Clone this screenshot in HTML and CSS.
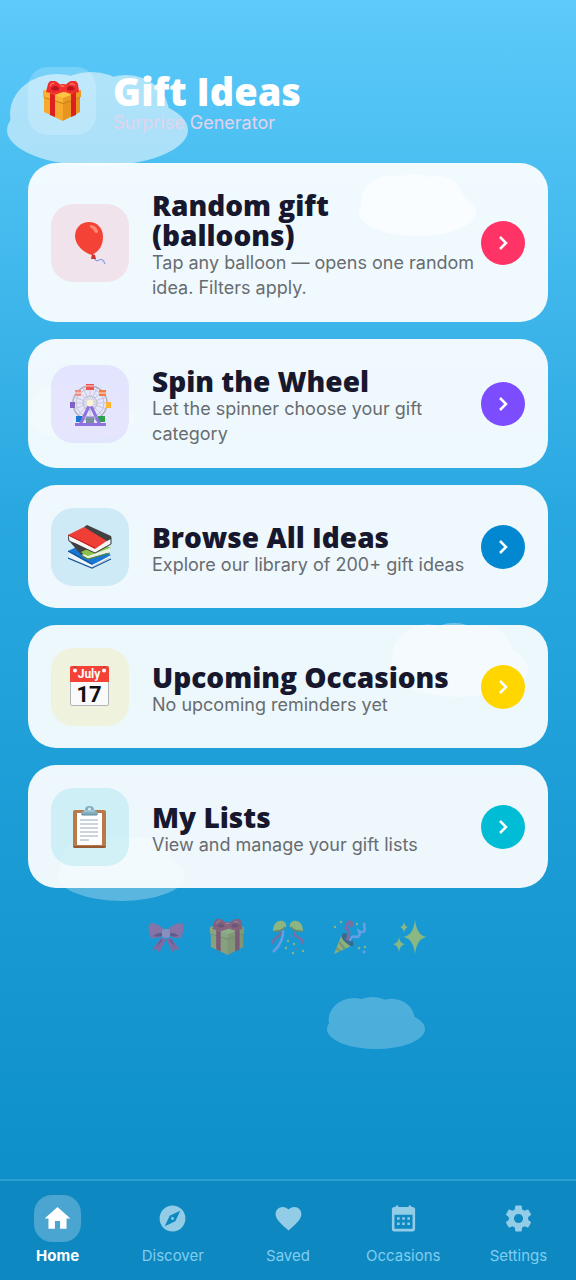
FILE: index.html
```html
<!DOCTYPE html>
<html lang="en">
<head>
<meta charset="utf-8">
<meta name="viewport" content="width=device-width, initial-scale=1">
<title>Gift Ideas</title>
<link rel="stylesheet" href="styles.css">
</head>
<body>
<svg class="defs" aria-hidden="true">
  <symbol id="cloud" viewBox="0 0 181 94" preserveAspectRatio="none">
    <ellipse cx="90.500" cy="58" rx="90.500" ry="36"/><ellipse cx="50" cy="42" rx="47" ry="40"/><ellipse cx="84" cy="40" rx="48" ry="40"/><ellipse cx="119" cy="41" rx="43" ry="38"/>
  </symbol>
  <symbol id="gift" viewBox="0 0 40 40">
    <path fill="#f6a92c" d="M2 15l19 6v19L2 31z"/><path fill="#e8951f" d="M21 21l17-6v16l-17 9z"/>
    <path fill="#ffc645" d="M1 9l19-4 19 4-18 7z"/><path fill="#f9b233" d="M1 9l20 7v6L1 16z"/><path fill="#eb9a22" d="M21 16l18-7v7l-18 6z"/>
    <path fill="#c8801a" d="M2 16l19 6v1L2 17zM38 16l-17 6v1l17-6z"/>
    <path fill="#dd1f1f" d="M8 12l5 2v22l-5-2zM29 13l5-2v23l-5 2z"/>
    <path fill="#f23a2e" d="M8 12l19-6 6 2-20 6zM34 11L15 5l-5 2 19 6z"/><path fill="#ffc645" d="M21 11l8 3-8 3-8-3z"/>
    <path fill="#ef2b2b" d="M20 6C14-2 8-2 6 3L4 11c6 2 11 1 15-1zM22 6c6-8 12-8 14-3l1 8c-6 2-10 1-14-1z"/>
    <path fill="#b91520" d="M18 8c-3-4-6-4-9 0 3 2 6 2 9 0zM24 8c3-4 6-4 9 0-3 2-6 2-9 0z"/>
    <rect x="17" y="3" width="8" height="8" rx="3" fill="#f4342b"/><path stroke="#ff9187" stroke-linecap="round" d="M8 5q1-3 4-3M28 3q3-1 5 1M19 5h3" fill="none"/>
  </symbol>
  <symbol id="chevron" viewBox="0 0 24 24"><path d="M9 6l6 6-6 6" fill="none" stroke="#fff" stroke-width="2.500"/></symbol>
</svg>

<div class="sky" aria-hidden="true">
  <svg class="cloud cloud-a"><use href="#cloud"/></svg>
  <svg class="cloud cloud-b"><use href="#cloud"/></svg>
  <svg class="cloud cloud-c"><use href="#cloud"/></svg>
  <svg class="cloud cloud-d"><use href="#cloud"/></svg>
  <svg class="cloud cloud-e"><use href="#cloud"/></svg>
  <svg class="cloud cloud-f"><use href="#cloud"/></svg>
</div>

<main class="page">
  <header class="header">
    <div class="logo"><svg class="logo-art" aria-hidden="true"><use href="#gift"/></svg></div>
    <div class="heading">
      <h1 class="brand">Gift Ideas</h1>
      <p class="tagline">Surprise Generator</p>
    </div>
  </header>

  <section class="cards">
    <a class="card" href="#balloons">
      <span class="tile pink"><svg class="art" viewBox="0 0 44 44" aria-hidden="true">
        <path d="M26 37q2 4 5 2 4-2 6 4" fill="none" stroke="#7f9fe6" stroke-width="1.200"/>
        <path fill="#f44336" d="M21 1C12 1 7 8 7 15c0 9 9 17 17 19 8-4 11-11 11-18C35 7 29 1 21 1z"/><path fill="#d32f2f" d="M24 33l3 1 1 4h-5z"/><path fill="#ff8a70" d="M22 4c4 0 8 3 8 7-1 2-3 1-4-1-1-3-5-3-4-6z"/></svg></span>
      <span class="copy"><strong class="title">Random gift (balloons)</strong><span class="desc">Tap any balloon — opens one random idea. Filters apply.</span></span>
      <span class="go go-pink"><svg class="chev" aria-hidden="true"><use href="#chevron"/></svg></span>
    </a>
    <a class="card" href="#wheel">
      <span class="tile violet"><svg class="art" viewBox="0 0 44 44" aria-hidden="true">
        <circle cx="22" cy="21" r="17" fill="none" stroke="#aeb0bd" stroke-width="1.500"/><circle cx="22" cy="21" r="14" fill="none" stroke="#c4c6d2"/><circle cx="22" cy="21" r="7" fill="none" stroke="#b9bbc8"/>
        <path stroke="#bfc0cd" stroke-width=".8" d="M22 4v34M5 21h34M10 9l24 24M34 9L10 33M15 6l14 30M29 6L15 36M6 15l32 12M38 15L6 27"/>
        <path fill="#ef5350" d="M18 2h8v6h-8z"/><path fill="#f28b82" d="M7 8h6v6H7z"/><path fill="#f57c45" d="M31 8h7v6h-7z"/><path fill="#8061c8" d="M2 20h5v6H2z"/><path fill="#ffb52e" d="M38 20h5v6h-5z"/><path fill="#1976d2" d="M8 34h7v6H8z"/><path fill="#2e9e4f" d="M30 34h7v6h-7z"/><path fill="#78909c" d="M18 35h8v6h-8z"/>
        <path d="M21 24L12 43M23 24l9 19M7 42.500h31" stroke="#8f72dd" stroke-width="3"/><path d="M14 35h16" stroke="#a98fe8"/>
        <circle cx="22" cy="21" r="3.500" fill="#fff5d6"/><path d="M18 4h8M7 11h6M31 11h7" stroke="#fff" stroke-width=".8"/></svg></span>
      <span class="copy"><strong class="title">Spin the Wheel</strong><span class="desc">Let the spinner choose your gift category</span></span>
      <span class="go go-violet"><svg class="chev" aria-hidden="true"><use href="#chevron"/></svg></span>
    </a>
    <a class="card" href="#browse">
      <span class="tile blue"><svg class="art" viewBox="0 0 44 44" aria-hidden="true">
        <path fill="#1976d2" d="M0 26l17-8 26 12-19 11z"/><path fill="#f2f5f7" d="M1 28l23 12 18-9v4L24 43 1 32z"/><path d="M0 26l24 13M0 33l24 10 19-9" fill="none" stroke="#12579f" stroke-width="1.200"/><path d="M24 42l18-9" stroke="#9fb3c0" stroke-width=".8"/>
        <path fill="#424242" d="M2 17l14 16 10-4-8-9z"/><path fill="#8bc34a" d="M13 27l20-9 10 5-24 9z"/><path fill="#eaf1df" d="M15 29l5 2 22-8v4l-22 7-6-4z"/><path d="M14 31l6 3 22-6" stroke="#55883a" fill="none" stroke-width="1.200"/>
        <path fill="#f5f5f5" d="M1 11l26 12 15-9v5L27 28 1 15z"/><path fill="#ef3e36" d="M0 10L16 2l27 11-16 11z"/><path fill="#424242" d="M16 2l3-2 24 11q1 1 0 3l-4 2z"/><path d="M43 13v6l-16 9L1 16l-1-6" fill="none" stroke="#3b3b3b"/><path d="M0 10l27 13" stroke="#b71c1c"/></svg></span>
      <span class="copy"><strong class="title">Browse All Ideas</strong><span class="desc">Explore our library of 200+ gift ideas</span></span>
      <span class="go go-blue"><svg class="chev" aria-hidden="true"><use href="#chevron"/></svg></span>
    </a>
    <a class="card" href="#occasions">
      <span class="tile yellow"><svg class="art" viewBox="0 0 44 44" role="img" aria-label="July 17">
        <rect x="2.500" y="1.500" width="38" height="39" rx="1.500" fill="#fafafa" stroke="#b0b4b8"/><path fill="#f44336" d="M2 3q0-2 2-2h35q2 0 2 2v14H2z"/>
        <path d="M7 1v4M36 1v4" stroke="#b5332b" stroke-width="1.500"/><circle cx="7" cy="5.500" r="2" fill="#fff"/><circle cx="36" cy="5.500" r="2" fill="#fff"/>
        <text class="cal-month" x="21" y="13" text-anchor="middle">July</text><text class="cal-day" x="21" y="37" text-anchor="middle">17</text></svg></span>
      <span class="copy"><strong class="title">Upcoming Occasions</strong><span class="desc">No upcoming reminders yet</span></span>
      <span class="go go-yellow"><svg class="chev" aria-hidden="true"><use href="#chevron"/></svg></span>
    </a>
    <a class="card" href="#lists">
      <span class="tile cyan"><svg class="art" viewBox="0 0 44 44" aria-hidden="true">
        <rect x="5" y="5" width="33" height="38" rx="2" fill="#b87a4b"/><path fill="#97592f" d="M5 41h33q0 2-2 2H7q-2 0-2-2z"/><path fill="#fff" d="M9 8h25v32H9z"/>
        <path d="M12 15h18M12 19h18M12 23h18M12 27h18M12 31h18M12 35h9" stroke="#98a9bc"/><path fill="#82aebf" d="M13 10q0-4 4-5 0-4 4.500-4T26 5q4 1 4 5z"/><path d="M14 10h15" stroke="#5d8798"/><circle cx="21.500" cy="4" r="1.500" fill="#d5eef4"/><path d="M16 6h11" stroke="#b7dae5"/></svg></span>
      <span class="copy"><strong class="title">My Lists</strong><span class="desc">View and manage your gift lists</span></span>
      <span class="go go-cyan"><svg class="chev" aria-hidden="true"><use href="#chevron"/></svg></span>
    </a>
  </section>

  <div class="party" aria-hidden="true">
    <svg class="bit" viewBox="0 0 36 36"><path fill="#e83e72" d="M13 19L4 31l5-1 2 4 7-14zM23 19l9 12-5-1-2 4-7-14z"/><path fill="#f0507e" d="M17 11C11 5 4 3 1 5c-1 5 0 10 2 14 6 1 11-1 15-5zM19 11c6-6 13-8 16-6 1 5 0 10-2 14-6 1-11-1-15-5z"/><path fill="#a91f50" d="M15 14q-5-1-10 3 6 2 11-1zM21 14q5-1 10 3-6 2-11-1zM13 20l-5 9 6-7zM23 20l5 9-6-7z"/><rect x="14" y="10" width="8" height="9" rx="3" fill="#f48aac"/></svg>
    <svg class="bit"><use href="#gift"/></svg>
    <svg class="bit" viewBox="0 0 36 36"><path d="M13 11q1 12-10 22" stroke="#b7a6f5" stroke-width="2.500" fill="none"/><path d="M11 13q-1 4-5 6t-3 6M24 13q1 5 5 6t3 6" stroke="#d64576" stroke-width="2.500" fill="none"/><path fill="#ffd42e" d="M3 12C3 5 7 1 13 2q4 2 3 6-3 5-13 4zM33 12c0-7-4-11-10-10q-4 2-3 6 3 5 13 4z"/><path d="M4 12q8 1 11-4M32 12q-8 1-11-4" stroke="#a57b15" stroke-width="1.500" fill="none"/><g fill="#f7d134"><circle cx="18" cy="22" r="1.200"/><circle cx="24" cy="25" r="1.200"/><circle cx="16" cy="29" r="1.200"/><circle cx="23" cy="34" r="1.200"/><circle cx="33" cy="32" r="1.200"/></g><g fill="#e05589"><circle cx="20" cy="17" r="1"/><circle cx="26" cy="30" r="1"/></g></svg>
    <svg class="bit" viewBox="0 0 36 36"><path fill="#ffca28" d="M11 15L3 35l19-9z"/><path d="M8 23l6 7M5 29l4 3" stroke="#d78d1e" stroke-width="2"/><path fill="#59414a" d="M11 15q3-3 8 3t3 9q-3 1-8-4t-3-8z"/><path d="M16 21q4-8-1-12 1-7 5-6 2 3-1 5" fill="none" stroke="#d94472" stroke-width="3"/><path d="M19 22q1-6 6-4 5 0 3-6 5 3 6-2-2-3 0-6" fill="none" stroke="#b7a6f5" stroke-width="2.500"/><g fill="#fbd03a"><circle cx="4" cy="8" r="1.200"/><circle cx="10" cy="3" r="1.200"/><circle cx="26" cy="5" r="1.200"/><circle cx="28" cy="29" r="1.200"/><circle cx="34" cy="28" r="1.200"/></g><circle cx="33" cy="33" r="1.500" fill="#b7a6f5"/></svg>
    <svg class="bit" viewBox="0 0 36 36"><path fill="#fdd835" d="M23 1q2 16 12 17-10 1-12 17-2-16-12-17Q21 17 23 1zM7 18q1 7 6 7-5 1-6 8-1-7-6-8 5 0 6-7zM12 3q1 5 4 5-3 1-4 5-1-4-4-5 3 0 4-5z"/></svg>
  </div>
</main>

<nav class="tabs" aria-label="Main">
  <a class="tab active" href="#home" aria-current="page"><span class="pill"><svg class="tab-icon" viewBox="0 0 24 24" aria-hidden="true"><path d="M10,20V14H14V20H19V12H22L12,3L2,12H5V20H10Z"/></svg></span>Home</a>
  <a class="tab" href="#discover"><span class="pill"><svg class="tab-icon" viewBox="0 0 24 24" aria-hidden="true"><path fill-rule="evenodd" d="M12 2a10 10 0 1 0 0 20 10 10 0 0 0 0-20zM14.190 14.190L6 18l3.810-8.190L18 6zM12 10.900a1.100 1.100 0 1 0 0 2.200 1.100 1.100 0 0 0 0-2.200z"/></svg></span>Discover</a>
  <a class="tab" href="#saved"><span class="pill"><svg class="tab-icon" viewBox="0 0 24 24" aria-hidden="true"><path d="M12,21.350L10.550,20.030C5.400,15.360 2,12.270 2,8.500C2,5.410 4.420,3 7.500,3C9.240,3 10.910,3.810 12,5.080C13.090,3.810 14.760,3 16.500,3C19.580,3 22,5.410 22,8.500C22,12.270 18.600,15.360 13.450,20.030L12,21.350Z"/></svg></span>Saved</a>
  <a class="tab" href="#calendar"><span class="pill"><svg class="tab-icon" viewBox="0 0 24 24" aria-hidden="true"><path fill-rule="evenodd" d="M19 3a2 2 0 0 1 2 2v15a2 2 0 0 1-2 2H5a2 2 0 0 1-2-2V5a2 2 0 0 1 2-2h1V2h2v1h8V2h2v1zM19 9H5v11h14zM7 11h2v2H7zM11 11h2v2h-2zM15 11h2v2h-2zM7 15h2v2H7zM11 15h2v2h-2zM15 15h2v2h-2z"/></svg></span>Occasions</a>
  <a class="tab" href="#settings"><span class="pill"><svg class="tab-icon" viewBox="0 0 24 24" aria-hidden="true"><path d="M12,15.500A3.500,3.500 0 0,1 8.500,12A3.500,3.500 0 0,1 12,8.500A3.500,3.500 0 0,1 15.500,12A3.500,3.500 0 0,1 12,15.500M19.430,12.970C19.470,12.650 19.500,12.330 19.500,12C19.500,11.670 19.470,11.340 19.430,11L21.540,9.370C21.730,9.220 21.780,8.950 21.660,8.730L19.660,5.270C19.540,5.050 19.270,4.960 19.050,5.050L16.560,6.050C16.040,5.660 15.500,5.320 14.870,5.070L14.500,2.420C14.460,2.180 14.250,2 14,2H10C9.750,2 9.540,2.180 9.500,2.420L9.130,5.070C8.500,5.320 7.960,5.660 7.440,6.050L4.950,5.050C4.730,4.960 4.460,5.050 4.340,5.270L2.340,8.730C2.210,8.950 2.270,9.220 2.460,9.370L4.570,11C4.530,11.340 4.500,11.670 4.500,12C4.500,12.330 4.530,12.650 4.570,12.970L2.460,14.630C2.270,14.780 2.210,15.050 2.340,15.270L4.340,18.730C4.460,18.950 4.730,19.030 4.950,18.950L7.440,17.940C7.960,18.340 8.500,18.680 9.130,18.930L9.500,21.580C9.540,21.820 9.750,22 10,22H14C14.250,22 14.460,21.820 14.500,21.580L14.870,18.930C15.500,18.670 16.040,18.340 16.560,17.940L19.050,18.950C19.270,19.030 19.540,18.950 19.660,18.730L21.660,15.270C21.780,15.050 21.730,14.780 21.540,14.630L19.430,12.970Z"/></svg></span>Settings</a>
</nav>
</body>
</html>
```
FILE: styles.css
```css
* { box-sizing: border-box; }

body {
  position: relative;
  display: flex;
  flex-direction: column;
  min-height: 100vh;
  margin: 0;
  background: linear-gradient(#5ccafa, #29a8e0 40%, #0a8cc7);
  font-family: Inter, "Open Sans", sans-serif;
}

a { color: inherit; text-decoration: none; }
h1, p { margin: 0; }
.defs { position: absolute; width: 0; height: 0; }

.sky { position: absolute; inset: 0; overflow: hidden; }
.cloud { position: absolute; fill: #fff; }
.cloud-a { left: 7px; top: 72px; width: 181px; height: 94px; opacity: .53; }
.cloud-b { left: 359px; top: 174px; width: 117px; height: 62px; opacity: .6; }
.cloud-c { left: 30px; top: 384px; width: 104px; height: 56px; opacity: .2; }
.cloud-d { left: 390px; top: 623px; width: 138px; height: 74px; opacity: .35; }
.cloud-e { left: 58px; top: 835px; width: 127px; height: 66px; opacity: .28; }
.cloud-f { left: 327px; top: 997px; width: 98px; height: 52px; opacity: .24; }

.page { position: relative; flex: 1; padding: 67px 28px 24px; }

.header { display: flex; align-items: center; gap: 17px; margin-bottom: 28px; }
.logo {
  display: grid;
  place-items: center;
  width: 68px;
  height: 68px;
  border-radius: 20px;
  background: rgba(255, 255, 255, .2);
}
.logo-art { width: 40px; height: 40px; }
.heading { padding-top: 2px; }
.brand { font: 800 38px/42px "Open Sans", sans-serif; color: #fff; }
.tagline { font-size: 18px; line-height: 22px; color: #e2d3ee; }

.cards { display: flex; flex-direction: column; gap: 17px; }
.card {
  display: flex;
  align-items: center;
  padding: 22px 23px;
  min-height: 123px;
  border-radius: 28px;
  background: rgba(255, 255, 255, .92);
}
.tile {
  display: grid;
  flex: none;
  place-items: center;
  width: 78px;
  height: 78px;
  margin-right: 23px;
  border-radius: 22px;
}
.pink { background: rgba(255, 45, 95, .11); }
.violet { background: rgba(124, 77, 255, .11); }
.blue { background: rgba(2, 136, 209, .13); }
.yellow { background: rgba(255, 214, 0, .12); }
.cyan { background: rgba(0, 188, 212, .13); }
.art { width: 44px; height: 44px; }
.cal-month { font: 700 12px Roboto, sans-serif; fill: #fff; }
.cal-day { font: 700 22px Roboto, sans-serif; fill: #111; }

.copy { display: flex; flex: 1; flex-direction: column; padding-top: 5px; }
.title { font: 800 28px/30px "Open Sans", sans-serif; color: #17172e; }
.desc { font-size: 18px; line-height: 25px; color: #686c70; }

.go {
  display: grid;
  flex: none;
  place-items: center;
  width: 44px;
  height: 44px;
  margin-left: 6px;
  border-radius: 50%;
}
.go-pink { background: #ff3366; }
.go-violet { background: #7c4dff; }
.go-blue { background: #0288d1; }
.go-yellow { background: #ffd600; }
.go-cyan { background: #00bcd4; }
.chev { width: 24px; height: 24px; }

.party { display: flex; justify-content: center; gap: 25px; margin-top: 31px; opacity: .5; }
.bit { width: 36px; height: 36px; }

.tabs {
  position: relative;
  display: flex;
  padding: 14px 0 14px;
  border-top: 2px solid #2e9fd2;
  background: #0d88c0;
}
.tab {
  display: flex;
  flex: 1;
  flex-direction: column;
  align-items: center;
  gap: 3px;
  font-size: 15px;
  line-height: 21px;
  color: #81cdf0;
}
.pill { display: grid; place-items: center; width: 47px; height: 47px; border-radius: 18px; }
.tab-icon { width: 31px; height: 31px; fill: #93cce6; }
.active { font-weight: 700; color: #fff; }
.active .pill { background: #4aa5d0; }
.active .tab-icon { fill: #fff; }
```
